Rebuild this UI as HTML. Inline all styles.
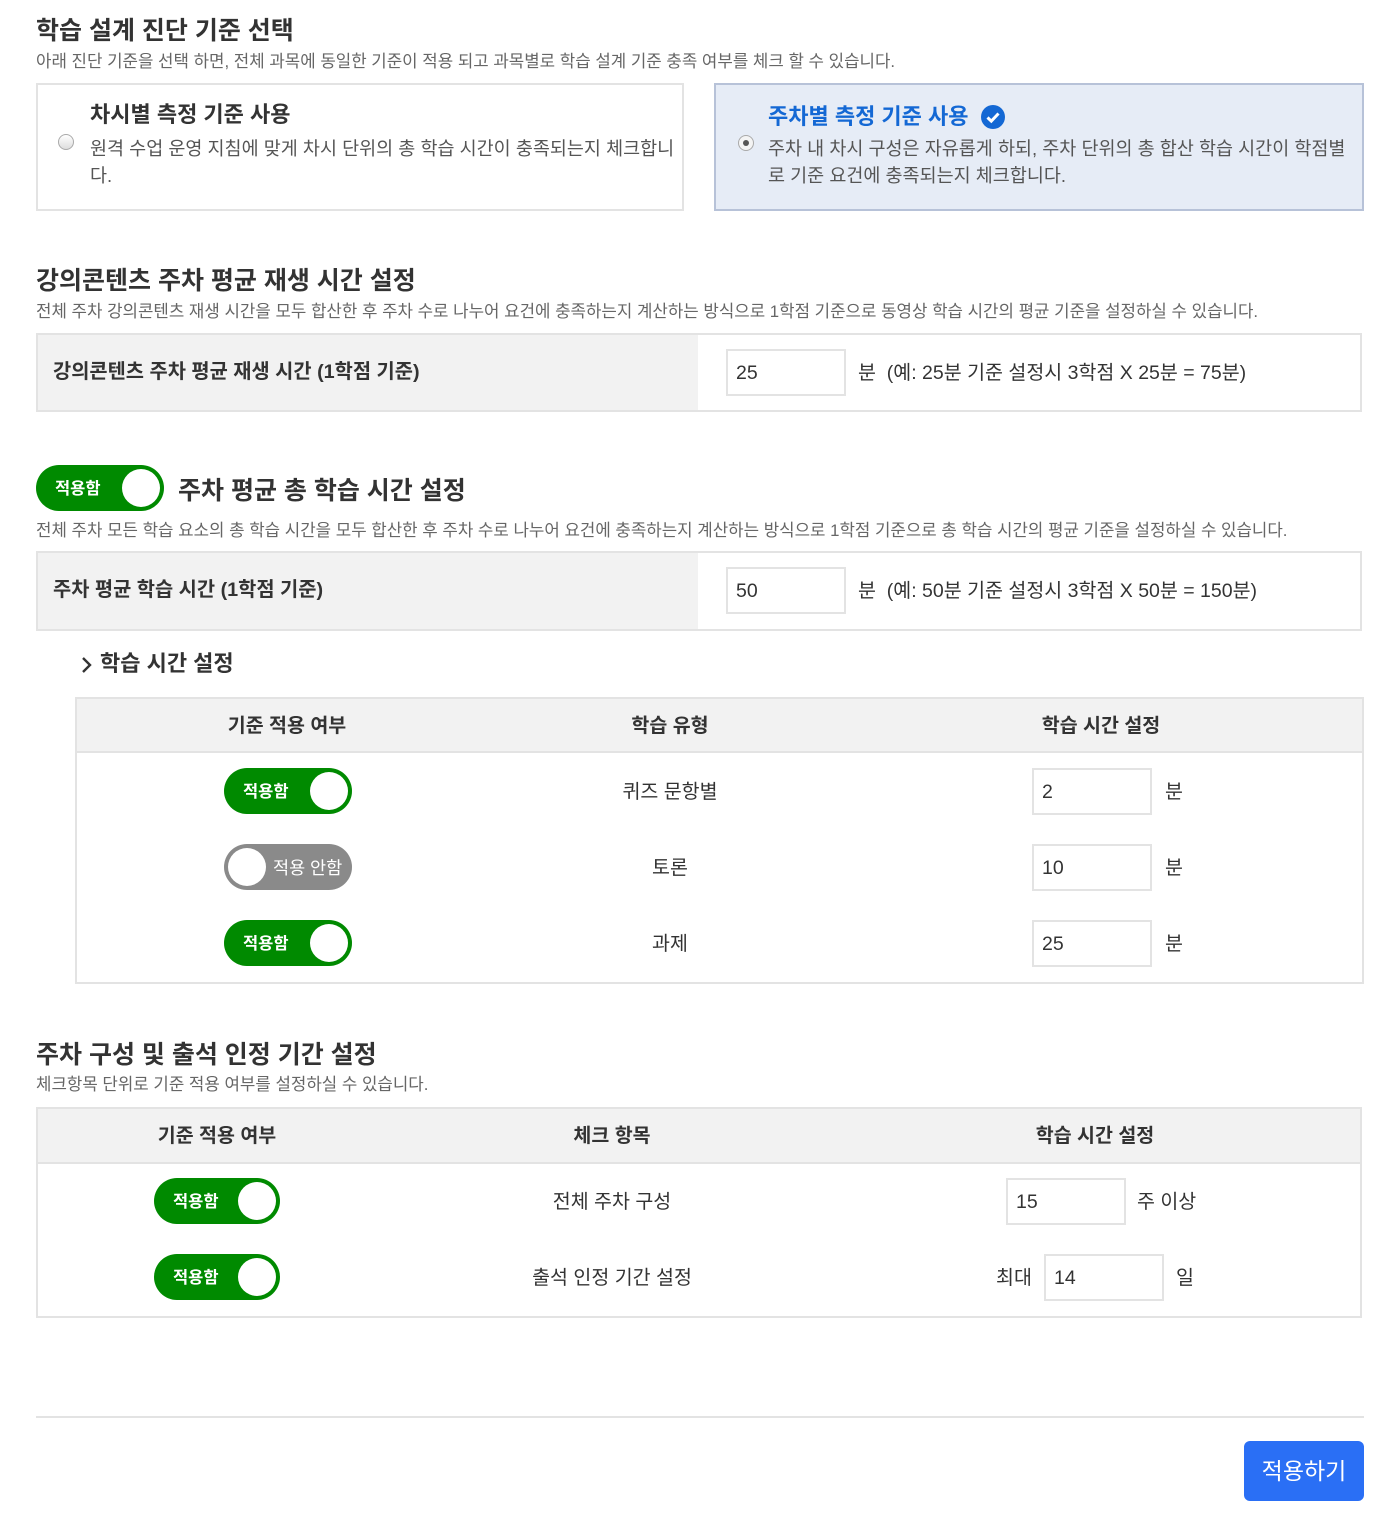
<!DOCTYPE html>
<html><head><meta charset="utf-8"><style>
*{margin:0;padding:0;box-sizing:border-box}
body{width:1399px;height:1537px;background:#fff;position:relative;font-family:"Liberation Sans","Noto Sans CJK KR",sans-serif;color:#333;overflow:hidden}
.a{position:absolute;white-space:nowrap}
.h{font-size:25px;font-weight:bold;color:#333;line-height:30px}
.s{font-size:16.8px;color:#666;line-height:20px}
.box{position:absolute;border:2px solid #e3e3e3}
.inp{position:absolute;width:120px;height:47px;border:2px solid #e3e3e3;background:#fff;font-size:19.5px;line-height:45px;padding-left:8px;color:#333}
.tg{position:absolute;width:128px;height:46px;border-radius:23px;background:#008a00}
.tg .k{position:absolute;right:4px;top:4px;width:38px;height:38px;border-radius:50%;background:#fff}
.tg .t{position:absolute;left:19px;top:1px;line-height:46px;color:#fff;font-size:16.5px;font-weight:bold}
.tg.off{background:#8a8a8a}
.tg.off .k{left:4px;right:auto}
.tg.off .t{left:49px;font-weight:normal;font-size:17.5px}
.c{position:absolute;transform:translateX(-50%);white-space:nowrap;font-size:19.5px;color:#333;line-height:24px}
.th{font-weight:bold;font-size:19.5px}
.l{font-size:19.5px;color:#333;line-height:24px}
</style></head><body>

<div class="a h" style="left:36px;top:16px">학습 설계 진단 기준 선택</div>
<div class="a s" style="left:36px;top:52px">아래 진단 기준을 선택 하면, 전체 과목에 동일한 기준이 적용 되고 과목별로 학습 설계 기준 충족 여부를 체크 할 수 있습니다.</div>

<div class="box" style="left:36px;top:83px;width:648px;height:128px"></div>
<div class="a" style="left:58px;top:134px;width:16px;height:16px;border-radius:50%;border:1px solid #aaa;background:linear-gradient(#fff,#ddd)"></div>
<div class="a" style="left:90px;top:101px;font-size:22px;font-weight:bold;line-height:28px">차시별 측정 기준 사용</div>
<div class="a" style="left:90px;top:135px;font-size:18.5px;line-height:27px;color:#555;white-space:normal;width:585px">원격 수업 운영 지침에 맞게 차시 단위의 총 학습 시간이 충족되는지 체크합니다.</div>

<div class="a" style="left:714px;top:83px;width:650px;height:128px;background:#e6ecf6;border:2px solid #b7c2d8"></div>
<div class="a" style="left:738px;top:135px;width:16px;height:16px;border-radius:50%;border:1px solid #aaa;background:#f4f4f4"><div style="position:absolute;left:4px;top:4px;width:6px;height:6px;border-radius:50%;background:#555"></div></div>
<div class="a" style="left:768px;top:103px;font-size:22px;font-weight:bold;line-height:28px;color:#1468d4">주차별 측정 기준 사용</div>
<svg class="a" style="left:981px;top:105px" width="24" height="24" viewBox="0 0 24 24"><circle cx="12" cy="12" r="12" fill="#1468d4"/><path d="M6.5 12.5l3.8 3.6 7.2-7.6" stroke="#fff" stroke-width="3" fill="none"/></svg>
<div class="a" style="left:768px;top:135px;font-size:18.5px;line-height:27px;color:#555;white-space:normal;width:585px">주차 내 차시 구성은 자유롭게 하되, 주차 단위의 총 합산 학습 시간이 학점별로 기준 요건에 충족되는지 체크합니다.</div>

<div class="a h" style="left:36px;top:266px">강의콘텐츠 주차 평균 재생 시간 설정</div>
<div class="a s" style="left:36px;top:302px">전체 주차 강의콘텐츠 재생 시간을 모두 합산한 후 주차 수로 나누어 요건에 충족하는지 계산하는 방식으로 1학점 기준으로 동영상 학습 시간의 평균 기준을 설정하실 수 있습니다.</div>
<div class="box" style="left:36px;top:333px;width:1326px;height:79px"></div>
<div class="a" style="left:38px;top:335px;width:660px;height:75px;background:#f2f2f2"></div>
<div class="a" style="left:53px;top:360px;font-size:19.8px;font-weight:bold;line-height:24px">강의콘텐츠 주차 평균 재생 시간 (1학점 기준)</div>
<div class="inp" style="left:726px;top:349px">25</div>
<div class="a l" style="left:858px;top:361px">분&nbsp; (예: 25분 기준 설정시 3학점 X 25분 = 75분)</div>

<div class="tg" style="left:36px;top:465px"><div class="t">적용함</div><div class="k"></div></div>
<div class="a h" style="left:178px;top:476px">주차 평균 총 학습 시간 설정</div>
<div class="a s" style="left:36px;top:521px">전체 주차 모든 학습 요소의 총 학습 시간을 모두 합산한 후 주차 수로 나누어 요건에 충족하는지 계산하는 방식으로 1학점 기준으로 총 학습 시간의 평균 기준을 설정하실 수 있습니다.</div>
<div class="box" style="left:36px;top:551px;width:1326px;height:80px"></div>
<div class="a" style="left:38px;top:553px;width:660px;height:76px;background:#f2f2f2"></div>
<div class="a" style="left:53px;top:578px;font-size:19.8px;font-weight:bold;line-height:24px">주차 평균 학습 시간 (1학점 기준)</div>
<div class="inp" style="left:726px;top:567px">50</div>
<div class="a l" style="left:858px;top:579px">분&nbsp; (예: 50분 기준 설정시 3학점 X 50분 = 150분)</div>

<svg class="a" style="left:81px;top:656px" width="12" height="18" viewBox="0 0 12 18"><path d="M2 2l7 7-7 7" stroke="#333" stroke-width="2.4" fill="none"/></svg>
<div class="a" style="left:100px;top:650px;font-size:22px;font-weight:bold;line-height:28px">학습 시간 설정</div>

<div class="box" style="left:75px;top:697px;width:1289px;height:287px"></div>
<div class="a" style="left:77px;top:699px;width:1285px;height:54px;background:#f2f2f2;border-bottom:2px solid #e3e3e3"></div>
<div class="c th" style="left:287px;top:714px">기준 적용 여부</div>
<div class="c th" style="left:670px;top:714px">학습 유형</div>
<div class="c th" style="left:1101px;top:714px">학습 시간 설정</div>

<div class="tg" style="left:224px;top:768px"><div class="t">적용함</div><div class="k"></div></div>
<div class="c" style="left:670px;top:780px">퀴즈 문항별</div>
<div class="inp" style="left:1032px;top:768px">2</div>
<div class="a l" style="left:1165px;top:780px">분</div>

<div class="tg off" style="left:224px;top:844px"><div class="k"></div><div class="t">적용 안함</div></div>
<div class="c" style="left:670px;top:856px">토론</div>
<div class="inp" style="left:1032px;top:844px">10</div>
<div class="a l" style="left:1165px;top:856px">분</div>

<div class="tg" style="left:224px;top:920px"><div class="t">적용함</div><div class="k"></div></div>
<div class="c" style="left:670px;top:932px">과제</div>
<div class="inp" style="left:1032px;top:920px">25</div>
<div class="a l" style="left:1165px;top:932px">분</div>

<div class="a h" style="left:36px;top:1040px">주차 구성 및 출석 인정 기간 설정</div>
<div class="a s" style="left:36px;top:1075px">체크항목 단위로 기준 적용 여부를 설정하실 수 있습니다.</div>
<div class="box" style="left:36px;top:1107px;width:1326px;height:211px"></div>
<div class="a" style="left:38px;top:1109px;width:1322px;height:55px;background:#f2f2f2;border-bottom:2px solid #e3e3e3"></div>
<div class="c th" style="left:217px;top:1124px">기준 적용 여부</div>
<div class="c th" style="left:612px;top:1124px">체크 항목</div>
<div class="c th" style="left:1095px;top:1124px">학습 시간 설정</div>

<div class="tg" style="left:154px;top:1178px;width:126px"><div class="t">적용함</div><div class="k"></div></div>
<div class="c" style="left:612px;top:1190px">전체 주차 구성</div>
<div class="inp" style="left:1006px;top:1178px">15</div>
<div class="a l" style="left:1137px;top:1190px">주 이상</div>

<div class="tg" style="left:154px;top:1254px;width:126px"><div class="t">적용함</div><div class="k"></div></div>
<div class="c" style="left:612px;top:1266px">출석 인정 기간 설정</div>
<div class="a l" style="left:996px;top:1266px">최대</div>
<div class="inp" style="left:1044px;top:1254px">14</div>
<div class="a l" style="left:1176px;top:1266px">일</div>

<div class="a" style="left:36px;top:1416px;width:1328px;height:2px;background:#e3e3e3"></div>
<div class="a" style="left:1244px;top:1441px;width:120px;height:60px;border-radius:6px;background:#2a6ff5;color:#fff;font-size:23px;line-height:60px;text-align:center">적용하기</div>
</body></html>
